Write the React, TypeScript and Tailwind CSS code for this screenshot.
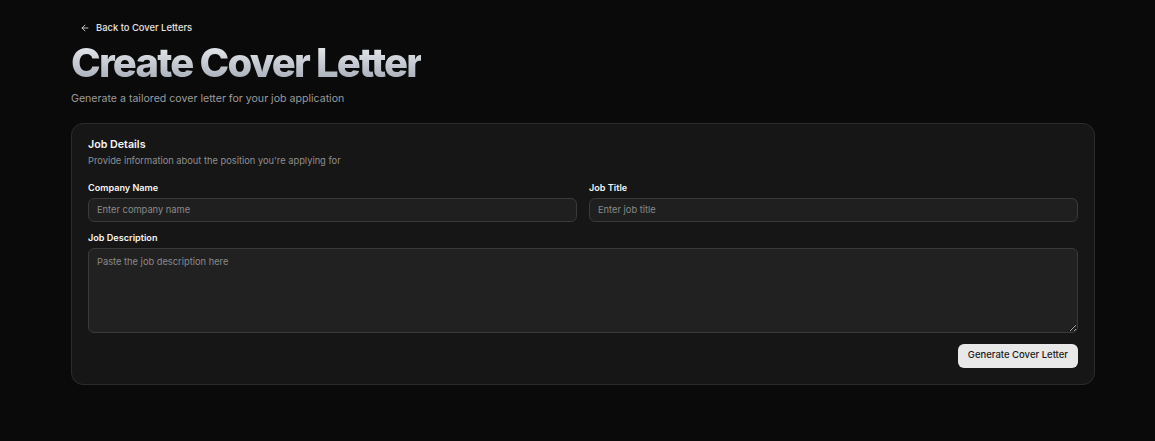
import React from 'react';

const App: React.FC = () => {
  return (
    <div className="min-h-screen w-full bg-[#0a0a0a] text-white" style={{ fontFamily: 'Inter, "Liberation Sans", sans-serif' }}>
      <main className="w-[1024px] ml-[71px] pt-[20px]">
        {/* Back link */}
        <button className="flex items-center gap-[6px] pl-[9px] h-[16px] text-[9.4px] font-medium text-[#e5e5e5]">
          <svg width="10" height="10" viewBox="0 0 24 24" fill="none" stroke="currentColor" strokeWidth="2" strokeLinecap="round" strokeLinejoin="round">
            <path d="m12 19-7-7 7-7" />
            <path d="M19 12H5" />
          </svg>
          <span>Back to Cover Letters</span>
        </button>

        {/* Title */}
        <h1 className="mt-[3px] text-[40px] leading-[48px] font-extrabold tracking-[-0.045em] bg-gradient-to-b from-[#f3f4f6] to-[#9ca3af] bg-clip-text text-transparent w-fit">
          Create Cover Letter
        </h1>
        <p className="mt-[4px] text-[10.6px] leading-[16px] text-[#9a9a9a]">Generate a tailored cover letter for your job application</p>

        {/* Card */}
        <section className="mt-[16px] rounded-xl border border-[#2b2b2b] bg-[#161616] px-[16px] pt-[13px] pb-[16px]">
          <h2 className="text-[10.7px] leading-[16px] font-semibold text-[#f5f5f5]">Job Details</h2>
          <p className="mt-[1px] text-[9.3px] leading-[14px] text-[#8f8f8f]">Provide information about the position you're applying for</p>

          <div className="mt-[13px] grid grid-cols-2 gap-[12px]">
            <div>
              <label className="block text-[9.1px] leading-[14px] font-semibold text-[#f5f5f5]">Company Name</label>
              <input
                className="mt-[2px] w-full h-[24px] rounded-md border border-[#3a3a3a] bg-[#1f1f1f] px-[8px] text-[9.3px] text-white placeholder-[#8a8a8a] outline-none"
                placeholder="Enter company name"
                type="text"
              />
            </div>
            <div>
              <label className="block text-[9.1px] leading-[14px] font-semibold text-[#f5f5f5]">Job Title</label>
              <input
                className="mt-[2px] w-full h-[24px] rounded-md border border-[#3a3a3a] bg-[#1f1f1f] px-[8px] text-[9.3px] text-white placeholder-[#8a8a8a] outline-none"
                placeholder="Enter job title"
                type="text"
              />
            </div>
          </div>

          <div className="mt-[9px]">
            <label className="block text-[9.1px] leading-[14px] font-semibold text-[#f5f5f5]">Job Description</label>
            <textarea
              className="mt-[3px] block w-full h-[85px] rounded-md border border-[#3a3a3a] bg-[#212121] px-[8px] py-[6px] text-[9.3px] text-white placeholder-[#8a8a8a] outline-none"
              placeholder="Paste the job description here"
            />
          </div>

          <div className="mt-[11px] flex justify-end">
            <button className="h-[24px] px-[10px] rounded-md bg-[#e8e8e8] text-[9.5px] font-medium text-[#1a1a1a]">
              Generate Cover Letter
            </button>
          </div>
        </section>
      </main>
    </div>
  );
};

export default App;
